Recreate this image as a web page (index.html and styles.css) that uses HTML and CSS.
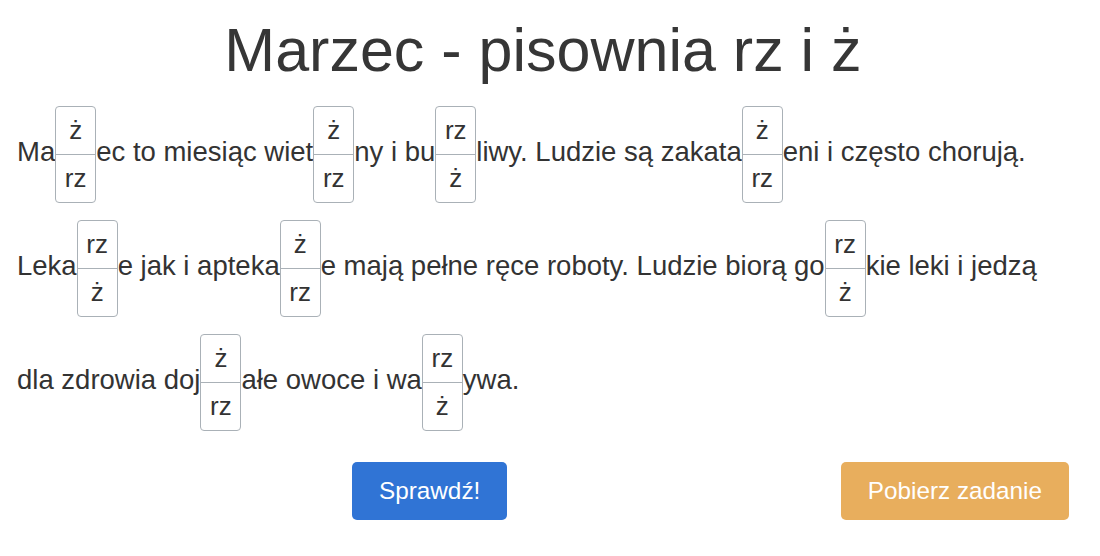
FILE: index.html
```html
<!DOCTYPE html>
<html lang="pl">
<head>
<meta charset="utf-8">
<title>Marzec - pisownia rz i ż</title>
<link rel="stylesheet" href="styles.css">
</head>
<body>
<div class="page">
  <h1 class="title">Marzec - pisownia rz i ż</h1>
  <p class="exercise">Ma<span class="choice"><span class="opt">ż</span><span class="opt">rz</span></span>ec to miesiąc wiet<span class="choice"><span class="opt">ż</span><span class="opt">rz</span></span>ny i bu<span class="choice"><span class="opt">rz</span><span class="opt">ż</span></span>liwy. Ludzie są zakata<span class="choice"><span class="opt">ż</span><span class="opt">rz</span></span>eni i często chorują. Leka<span class="choice"><span class="opt">rz</span><span class="opt">ż</span></span>e jak i apteka<span class="choice"><span class="opt">ż</span><span class="opt">rz</span></span>e mają pełne ręce roboty. Ludzie biorą go<span class="choice"><span class="opt">rz</span><span class="opt">ż</span></span>kie leki i jedzą dla zdrowia doj<span class="choice"><span class="opt">ż</span><span class="opt">rz</span></span>ałe owoce i wa<span class="choice"><span class="opt">rz</span><span class="opt">ż</span></span>ywa.</p>
  <div class="actions">
    <button class="btn btn-check" type="button">Sprawdź!</button>
    <button class="btn btn-download" type="button">Pobierz zadanie</button>
  </div>
</div>
</body>
</html>
```
FILE: styles.css
```css
html, body {
  margin: 0;
  padding: 0;
  background: #ffffff;
}
body {
  font-family: "Liberation Sans", Arial, sans-serif;
  color: #333333;
}
.page {
  width: 1052px;
  margin-left: 17px;
  padding-top: 14px;
}
.title {
  margin: 0;
  font-size: 61px;
  font-weight: 400;
  line-height: 1.2;
  text-align: center;
  color: #363636;
}
.exercise {
  margin: 10px 0 0 0;
  font-size: 27.5px;
  line-height: 1.4;
}
.choice {
  display: inline-flex;
  flex-direction: column;
  vertical-align: middle;
  width: 41px;
  box-sizing: border-box;
  border: 1px solid #aab1b7;
  border-radius: 4px;
  margin: 8.5px 0;
  line-height: 1;
  font-size: 26px;
  color: #333333;
  background: #ffffff;
}
.opt {
  height: 47px;
  display: flex;
  align-items: center;
  justify-content: center;
}
.opt + .opt {
  border-top: 1px solid #aab1b7;
}
.actions {
  display: flex;
  justify-content: space-between;
  padding-left: 335px;
  margin-top: 23px;
}
.btn {
  height: 58px;
  padding: 0 27px;
  border: none;
  border-radius: 5px;
  font-family: "Liberation Sans", Arial, sans-serif;
  font-size: 24.3px;
  color: #ffffff;
  cursor: pointer;
}
.btn-check {
  background: #3074d5;
}
.btn-download {
  background: #e8ae5d;
}
```
